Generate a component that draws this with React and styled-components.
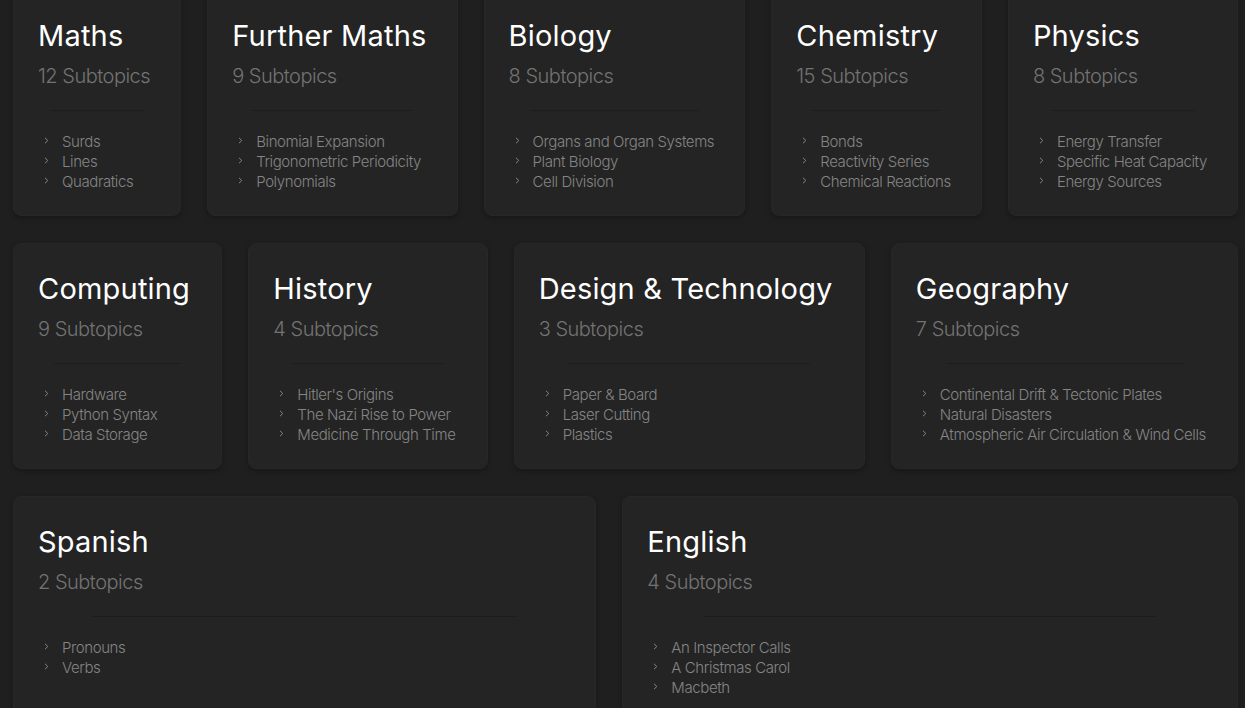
import React from 'react';
import styled, { createGlobalStyle } from 'styled-components';

const subjects = [
  { name: 'Maths', count: 12, topics: ['Surds', 'Lines', 'Quadratics'] },
  { name: 'Further Maths', count: 9, topics: ['Binomial Expansion', 'Trigonometric Periodicity', 'Polynomials'] },
  { name: 'Biology', count: 8, topics: ['Organs and Organ Systems', 'Plant Biology', 'Cell Division'] },
  { name: 'Chemistry', count: 15, topics: ['Bonds', 'Reactivity Series', 'Chemical Reactions'] },
  { name: 'Physics', count: 8, topics: ['Energy Transfer', 'Specific Heat Capacity', 'Energy Sources'] },
  { name: 'Computing', count: 9, topics: ['Hardware', 'Python Syntax', 'Data Storage'] },
  { name: 'History', count: 4, topics: ["Hitler's Origins", 'The Nazi Rise to Power', 'Medicine Through Time'] },
  { name: 'Design & Technology', count: 3, topics: ['Paper & Board', 'Laser Cutting', 'Plastics'] },
  {
    name: 'Geography',
    count: 7,
    topics: ['Continental Drift & Tectonic Plates', 'Natural Disasters', 'Atmospheric Air Circulation & Wind Cells'],
  },
  { name: 'Spanish', count: 2, topics: ['Pronouns', 'Verbs'] },
  { name: 'English', count: 4, topics: ['An Inspector Calls', 'A Christmas Carol', 'Macbeth'] },
];

const GlobalStyle = createGlobalStyle`
  html, body {
    margin: 0;
    padding: 0;
    background: #1f1f1f;
    overflow: hidden;
  }
  body {
    font-family: Inter, "Noto Sans", sans-serif;
    -webkit-font-smoothing: antialiased;
  }
`;

const Chevron = () => (
  <svg width="5" height="7" viewBox="0 0 5 7" fill="none">
    <path d="M1 0.8L3.8 3.5L1 6.2" stroke="#8a8a8a" strokeWidth="0.95" />
  </svg>
);

const SubjectCard = ({ name, count, topics }) => (
  <Card>
    <Title>{name}</Title>
    <Count>{count} Subtopics</Count>
    <Divider />
    <TopicList>
      {topics.map(topic => (
        <Topic key={topic}>
          <TopicIcon>
            <Chevron />
          </TopicIcon>
          <span>{topic}</span>
        </Topic>
      ))}
    </TopicList>
  </Card>
);

export default function App() {
  return (
    <>
      <GlobalStyle />
      <Grid>
        {subjects.map(subject => (
          <SubjectCard key={subject.name} {...subject} />
        ))}
      </Grid>
    </>
  );
}

const Grid = styled.div`
  display: flex;
  flex-wrap: wrap;
  gap: 27px 26px;
  margin-top: -10px;
  padding: 0 7px 0 13px;
`;

const Card = styled.div`
  flex: 1 1 auto;
  box-sizing: border-box;
  padding: 24px 24px 23px;
  background: #242424;
  border: 1px solid #272727;
  border-radius: 8px;
  box-shadow: 0 2px 5px rgba(0, 0, 0, 0.28);
`;

const Title = styled.h2`
  margin: 0;
  font-size: 29px;
  line-height: 41px;
  font-weight: 400;
  letter-spacing: 0.2px;
  color: #ffffff;
  white-space: nowrap;
`;

const Count = styled.div`
  margin-top: 5px;
  font-size: 20px;
  line-height: 30px;
  font-weight: 300;
  letter-spacing: -0.5px;
  color: #737373;
  white-space: nowrap;
`;

const Divider = styled.div`
  width: 80%;
  height: 1px;
  margin: 19px auto 21px;
  background: #1d1d1d;
`;

const TopicList = styled.ul`
  list-style: none;
  margin: 0;
  padding: 0;
`;

const Topic = styled.li`
  display: flex;
  align-items: center;
  font-size: 15px;
  line-height: 20px;
  font-weight: 300;
  letter-spacing: -0.4px;
  color: #858585;
  white-space: nowrap;
`;

const TopicIcon = styled.span`
  display: flex;
  align-items: center;
  width: 24px;
  flex-shrink: 0;
  padding-left: 6px;
  box-sizing: border-box;
  margin-top: -3px;
`;
